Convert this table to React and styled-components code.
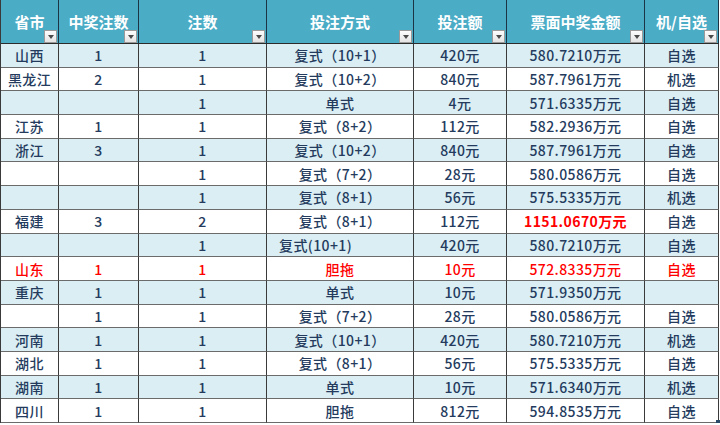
import React from 'react';
import styled, { createGlobalStyle } from 'styled-components';

const GlobalStyle = createGlobalStyle`
  html, body {
    margin: 0;
    padding: 0;
    background: #ffffff;
  }
  body {
    font-family: 'Noto Sans CJK SC', 'Noto Sans', sans-serif;
  }
`;

const Sheet = styled.div`
  display: grid;
  grid-template-columns: 58px 80px 128px 147px 93px 138px 74px;
  grid-template-rows: 44px repeat(16, 23.6875px);
  width: 719px;
  border-left: 1px solid #3a3a3a;
  box-sizing: border-box;
`;

const HeadCell = styled.div`
  position: relative;
  display: flex;
  align-items: center;
  justify-content: center;
  box-sizing: border-box;
  background: #4bacc6;
  color: #ffffff;
  font-size: 15px;
  font-weight: 700;
  border-right: 1px solid #1d3446;
  border-bottom: 1px solid #2b2b2b;
  padding-bottom: 1px;
`;

const FilterButton = styled.span`
  position: absolute;
  right: 1px;
  bottom: 0px;
  width: 13px;
  height: 13px;
  box-sizing: border-box;
  border: 1px solid #9a9a9a;
  background: linear-gradient(#fdfdfd, #e4e4e4);
  display: flex;
  align-items: center;
  justify-content: center;

  &::after {
    content: '';
    width: 0;
    height: 0;
    border-left: 3px solid transparent;
    border-right: 3px solid transparent;
    border-top: 4px solid #4a4a4a;
    margin-top: 1px;
  }
`;

const Cell = styled.div`
  position: relative;
  display: flex;
  align-items: center;
  justify-content: ${(p) => (p.$left ? 'flex-start' : 'center')};
  padding-left: ${(p) => (p.$left ? '12px' : '0')};
  box-sizing: border-box;
  background: ${(p) => (p.$striped ? '#daeef3' : '#ffffff')};
  color: ${(p) => (p.$red ? '#ff0000' : '#243b5e')};
  font-size: 14px;
  font-weight: ${(p) => (p.$bold ? 700 : 500)};
  letter-spacing: 0.4px;
  border-right: 1px solid #3a3a3a;
  border-bottom: 1px solid #6b6b6b;
  white-space: nowrap;
`;

const CornerMark = styled.span`
  position: absolute;
  right: -2px;
  bottom: -2px;
  width: 4px;
  height: 4px;
  background: #2a4a6a;
`;

const headers = ['省市', '中奖注数', '注数', '投注方式', '投注额', '票面中奖金额', '机/自选'];

const rows = [
  ['山西', '1', '1', '复式（10+1）', '420元', '580.7210万元', '自选'],
  ['黑龙江', '2', '1', '复式（10+2）', '840元', '587.7961万元', '机选'],
  ['', '', '1', '单式', '4元', '571.6335万元', '自选'],
  ['江苏', '1', '1', '复式（8+2）', '112元', '582.2936万元', '自选'],
  ['浙江', '3', '1', '复式（10+2）', '840元', '587.7961万元', '自选'],
  ['', '', '1', '复式（7+2）', '28元', '580.0586万元', '自选'],
  ['', '', '1', '复式（8+1）', '56元', '575.5335万元', '机选'],
  ['福建', '3', '2', '复式（8+1）', '112元', '1151.0670万元', '自选'],
  ['', '', '1', '复式(10+1)', '420元', '580.7210万元', '自选'],
  ['山东', '1', '1', '胆拖', '10元', '572.8335万元', '自选'],
  ['重庆', '1', '1', '单式', '10元', '571.9350万元', ''],
  ['', '1', '1', '复式（7+2）', '28元', '580.0586万元', '自选'],
  ['河南', '1', '1', '复式（10+1）', '420元', '580.7210万元', '机选'],
  ['湖北', '1', '1', '复式（8+1）', '56元', '575.5335万元', '自选'],
  ['湖南', '1', '1', '单式', '10元', '571.6340万元', '机选'],
  ['四川', '1', '1', '胆拖', '812元', '594.8535万元', '自选'],
];

const App = () => {
  return (
    <>
      <GlobalStyle />
      <Sheet>
        {headers.map((h) => (
          <HeadCell key={h}>
            {h}
            <FilterButton />
          </HeadCell>
        ))}
        {rows.map((row, r) =>
          row.map((value, c) => {
            const redRow = r === 9;
            const jackpot = r === 7 && c === 5;
            const isLast = r === rows.length - 1 && c === row.length - 1;
            return (
              <Cell
                key={`${r}-${c}`}
                $striped={r % 2 === 0}
                $red={redRow || jackpot}
                $bold={jackpot}
                $left={r === 8 && c === 3}
              >
                {value}
                {isLast && <CornerMark />}
              </Cell>
            );
          })
        )}
      </Sheet>
    </>
  );
};

export default App;
